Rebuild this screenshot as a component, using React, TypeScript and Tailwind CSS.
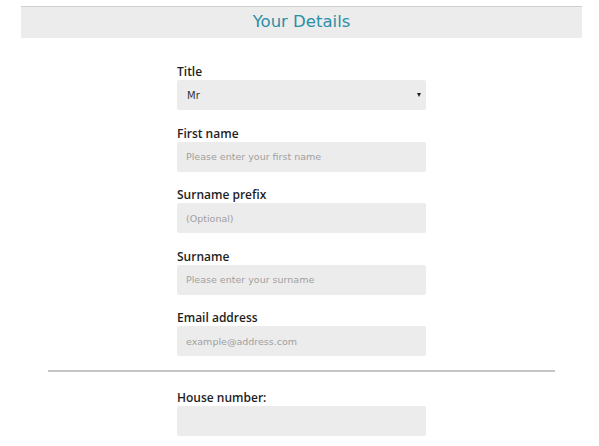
const fields = [
  { label: "First name", placeholder: "Please enter your first name" },
  { label: "Surname prefix", placeholder: "(Optional)" },
  { label: "Surname", placeholder: "Please enter your surname" },
  { label: "Email address", placeholder: "example@address.com" },
];

const labelCls =
  "block text-[12px] leading-[14px] mb-[1px] font-semibold text-[#1e1e1e] [font-family:'Open_Sans',sans-serif]";

function Field({ label, placeholder }: { label: string; placeholder: string }) {
  return (
    <div className="mt-[16.5px]">
      <label className={labelCls}>{label}</label>
      <input
        className="block w-full h-[30px] bg-[#ececec] rounded-[2px] px-[9px] text-[9.5px] text-[#333] outline-none placeholder:text-[#a0a0a0]"
        placeholder={placeholder}
      />
    </div>
  );
}

export default function App() {
  return (
    <div className="min-h-screen bg-white pt-[6px] overflow-hidden" style={{ fontFamily: '"DejaVu Sans", sans-serif' }}>
      <div className="ml-[21px] mr-[17px] h-[32px] border-t border-[#cfcfcf] bg-[#ececec] flex items-center justify-center">
        <h1 className="text-[16.5px] text-[#2b8fa7]">Your Details</h1>
      </div>

      <div className="ml-[177px] w-[249px] pt-[27px] pb-[14px]">
        <div>
          <label className={labelCls}>Title</label>
          <div className="relative h-[30px] bg-[#ececec] rounded-[2px] flex items-center px-[10px] text-[10px] text-[#333]">
            Mr
            <span className="absolute right-[5px] top-[13px] w-0 h-0 border-l-[2px] border-r-[2px] border-t-[4px] border-l-transparent border-r-transparent border-t-[#222]" />
          </div>
        </div>
        {fields.map((f) => (
          <Field key={f.label} {...f} />
        ))}
      </div>

      <div className="ml-[48px] w-[507px] border-t-2 border-[#c6c6c6]" />

      <div className="ml-[177px] w-[249px] pt-[19px]">
        <div>
          <label className={labelCls}>House number:</label>
          <input className="block w-full h-[30px] bg-[#ececec] rounded-[2px] px-[9px] text-[10px] outline-none" />
        </div>
      </div>
    </div>
  );
}
